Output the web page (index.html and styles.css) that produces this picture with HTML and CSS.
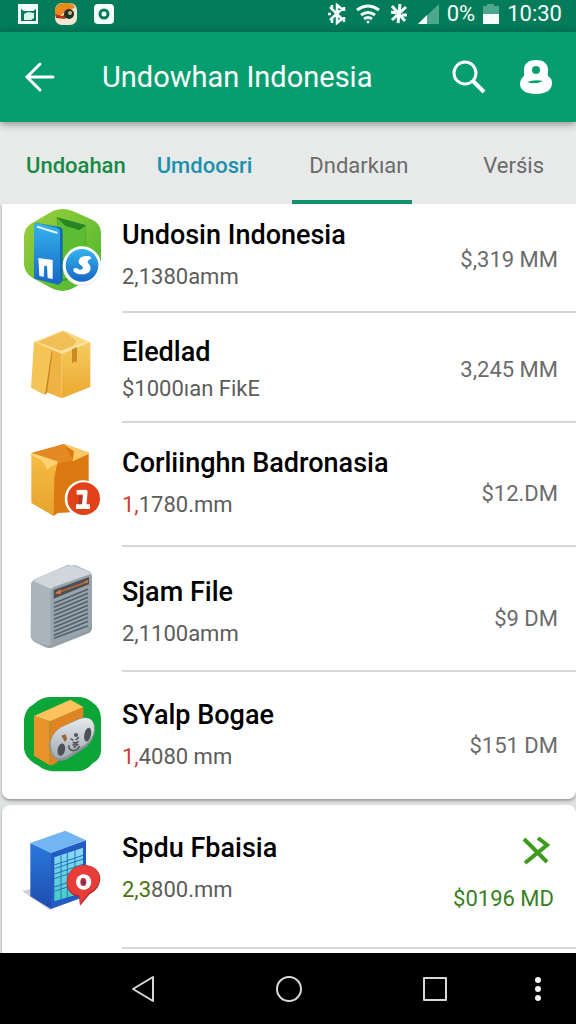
FILE: index.html
```html
<!DOCTYPE html>
<html lang="id">
<head>
  <meta charset="UTF-8">
  <meta name="viewport" content="width=device-width, initial-scale=1.0">
  <title>Undowhan Indonesia</title>
  <link rel="stylesheet" href="styles.css">
</head>
<body>
  <div class="status-bar">
    <div class="status-group">
      <svg class="status-app" viewBox="0 0 22 22">
        <path fill="#f4fffb" d="M1 1h20v20H1z"/>
        <path fill="#08785a" d="M4 6l3 2h9l3-2v12H4z"/>
        <path fill="#d8f5ea" d="M7 11l4-2 6 1v5l-3 2H7z"/>
      </svg>
      <svg class="status-app" viewBox="0 0 22 22">
        <rect width="22" height="22" rx="7" fill="#f0e6d2"/>
        <path fill="#e88a1c" d="M0 12V6q2-6 9-6h6q4 1 5 5l-7 2-8 6z"/>
        <path fill="#b5331c" d="M0 11l7 2 6-3-3 6-9-1z"/>
        <circle cx="14" cy="11" r="5" fill="#20302a"/>
        <circle cx="15" cy="10" r="2" fill="#d8b56b"/>
      </svg>
      <svg class="status-app" viewBox="0 0 22 22">
        <rect x="1" y="1" width="20" height="20" rx="4" fill="#f4fffb"/>
        <circle cx="11" cy="11" r="4" fill="none" stroke="#08785a" stroke-width="3"/>
      </svg>
    </div>
    <div class="status-group status-right">
      <svg width="20" height="22" viewBox="0 0 20 22" fill="none" stroke="#f4fffb" stroke-width="2.5">
        <path d="M3 4l12 12-5 4V2l5 4L3 17M5 2v5M5 14v6M1 11h3M17 4v4M17 14v5"/>
      </svg>
      <svg width="26" height="22" viewBox="0 0 26 22" fill="none" stroke="#f4fffb" stroke-width="3">
        <path d="M2 7q11-8 22 0M6 12q7-5 14 0M9 16q4-3 8 0"/>
        <circle cx="13" cy="19" r="1" fill="#f4fffb" stroke-width="1"/>
      </svg>
      <svg width="20" height="22" viewBox="0 0 20 22" fill="none" stroke="#f4fffb" stroke-width="3">
        <path d="M11 1L9 20M3 3l13 15M17 4L3 17M2 9l5 1M13 12h5"/>
      </svg>
      <svg width="22" height="22" viewBox="0 0 22 22">
        <path fill="#4da78c" d="M22 1v20H1z"/>
        <path fill="#f4fffb" d="M10 12v9H1z"/>
      </svg>
      <span>0%</span>
      <svg width="16" height="22" viewBox="0 0 16 22">
        <path fill="#4da78c" d="M4 1h7v2h5v8H0V3h4z"/>
        <path fill="#f4fffb" d="M0 11h16v10H0z"/>
      </svg>
      <time>10:30</time>
    </div>
  </div>

  <header class="app-bar">
    <button class="icon-button" aria-label="Back">
      <svg width="32" height="32" viewBox="0 0 32 32" fill="none" stroke="#fff" stroke-width="3" stroke-linecap="round">
        <path d="M29 16H4M16 3L3 16l13 13"/>
      </svg>
    </button>
    <h1>Undowhan Indonesia</h1>
    <button class="icon-button" aria-label="Search">
      <svg width="36" height="36" viewBox="0 0 36 36" fill="none" stroke="#fff">
        <circle cx="15" cy="14" r="11" stroke-width="3"/>
        <path stroke-width="4" d="M22 21l12 12"/>
      </svg>
    </button>
    <button class="icon-button" aria-label="Account">
      <svg width="32" height="36" viewBox="0 0 32 36">
        <path fill="#fff" d="M16 1c7 0 12 3 12 10 0 4-1 5 1 7 2 1 3 3 3 6 0 7-6 11-16 11S0 31 0 25c0-3 1-5 3-7 2-2 1-3 1-7C4 4 9 1 16 1z"/>
        <circle cx="16" cy="11" r="4" fill="#08a06f"/>
        <path fill="#08a06f" d="M7 23q8-3 16-1-7 4-16 1z"/>
      </svg>
    </button>
  </header>

  <nav class="tabs">
    <a class="tab green" href="#">Undoahan</a>
    <a class="tab blue" href="#">Umdoosri</a>
    <a class="tab active" href="#">Dndarkıan</a>
    <a class="tab last" href="#">Verśis</a>
  </nav>

  <main>
    <ul class="card">
      <li class="row row-first">
        <svg class="thumb" viewBox="66 24 246 288">
          <defs>
            <linearGradient id="blue" x1="0" y1="0" x2="0" y2="1">
              <stop offset="0" stop-color="#35b4ec"/><stop offset="1" stop-color="#1767c8"/>
            </linearGradient>
            <linearGradient id="green" x1="0" y1="0" x2="1" y2="1">
              <stop offset="0" stop-color="#a0cf3e"/><stop offset="1" stop-color="#45b52d"/>
            </linearGradient>
          </defs>
          <path fill="url(#green)" d="M160 32q30-10 58 1l62 28q22 11 23 38v94q-1 24-22 36l-62 36q-32 16-64 0l-58-32q-24-14-25-40v-84q1-28 24-40z"/>
          <path fill="#329a24" d="M170 52l88 24v150l-68 18z"/>
          <path fill="#5dbd32" d="M172 52l65 38 20-13v66l-26 90-45 4z"/>
          <path fill="#278525" d="M170 52l88 24-20 14-42-12z"/>
          <path fill="#126aae" d="M106 68l72 13q10 2 10 13v148l-12 12-73-18z"/>
          <path fill="url(#blue)" d="M108 68l63 15q9 3 9 12v148q-1 12-12 9l-58-17q-8-3-8-11V76q0-8 6-8z"/>
          <path stroke="#e4f7ff" stroke-width="6" d="M111 80l61 19"/>
          <path fill="#fff" d="M115 174l43 6v57l-15-3-2-36-8-1-2 34-13-4z"/>
          <circle cx="246" cy="199" r="58" fill="#e9eef2"/>
          <circle cx="246" cy="196" r="57" fill="#fff"/>
          <circle cx="246" cy="196" r="49" fill="url(#blue)"/>
          <path fill="#fff" d="M262 168c-14-2-28 7-26 19 2 9 12 10 13 16-2 7-12 8-18 2-8-4-14 3-9 10 9 10 39 12 48-3 6-12-4-19-7-26 0-7 11-8 11-12-2-4-7-6-12-6z"/>
        </svg>
        <div class="info">
          <h2>Undosin Indonesia</h2>
          <p>2,1380amm</p>
        </div>
        <div class="price">$,319 MM</div>
      </li>
      <li class="row row-second">
        <svg class="thumb" viewBox="66 21 246 288">
          <defs>
            <linearGradient id="box" x1="0" y1="0" x2="0" y2="1">
              <stop offset="0" stop-color="#f6cb5e"/><stop offset="1" stop-color="#eba92f"/>
            </linearGradient>
          </defs>
          <path fill="#ffe19a" d="M102 80l88-34 81 35-86 35z"/>
          <path fill="#f0bf55" d="M112 81l77-32 65 30-71 28z"/>
          <path fill="#f8d77f" d="M190 48l64 31-35 14 10-15z"/>
          <path fill="#efb344" d="M102 80l83 36v134l-48-20-35-18z"/>
          <path fill="url(#box)" d="M185 116l86-35v135l-86 34z"/>
          <path fill="#cc8a25" d="M216 103l15-7v46l-5-3-10 6z"/>
          <path fill="#c98622" d="M153 109l4 4-16 122-7 4z"/>
          <path fill="#f4c456" d="M102 80l53 24-20 136-42-22z"/>
        </svg>
        <div class="info">
          <h2>Eledlad</h2>
          <p>$1000ıan FikE</p>
        </div>
        <div class="price">3,245 MM</div>
      </li>
      <li class="row row-third">
        <svg class="thumb" viewBox="66 18 246 288">
          <defs>
            <linearGradient id="carton" x1="0" y1="0" x2="0" y2="1">
              <stop offset="0" stop-color="#f5bd45"/><stop offset="1" stop-color="#e7a32c"/>
            </linearGradient>
          </defs>
          <path fill="#dc7911" d="M94 69l98-27 74 26v176l-92 5-13 9z"/>
          <path fill="#e58a22" d="M96 69l96-26 20 9 3 40-45 8z"/>
          <path fill="#f9c964" d="M192 42l74 25-1 6-47 21z"/>
          <path fill="#dc7911" d="M192 44l30 20-4 28z"/>
          <path fill="url(#carton)" d="M94 69l79 25-10 48-2 116-67-39z"/>
          <path fill="#ffd170" d="M94 68l79 27-2 8q-12 2-30 16-5-16-17-28L94 76z"/>
          <circle cx="249" cy="206" r="55" fill="#fff"/>
          <circle cx="251" cy="206" r="49" fill="#e34118"/>
          <path fill="none" stroke="#fff" stroke-width="14" stroke-linejoin="round" d="M230 187l26-1-4 43M228 230h42"/>
          <path fill="#a93a2c" d="M235 200l13-4-2 26-9 1z"/>
        </svg>
        <div class="info">
          <h2>Corliinghn Badronasia</h2>
          <p><span class="red">1,</span>1780.mm</p>
        </div>
        <div class="price">$12.DM</div>
      </li>
      <li class="row row-fourth">
        <svg class="thumb" viewBox="66 45 246 288">
          <defs>
            <linearGradient id="metal" x1="0" y1="0" x2="1" y2="1">
              <stop offset="0" stop-color="#b8c1c8"/><stop offset="1" stop-color="#85919a"/>
            </linearGradient>
          </defs>
          <path fill="url(#metal)" transform="translate(0 6)" d="M93 98q0-12 14-18l91-39q14-7 27-2l40 18q11 5 11 18v151q0 14-11 18l-105 42q-12 5-24 0l-32-16q-12-7-12-20z"/>
          <path fill="#d0d6da" d="M102 87l103-40q10-5 22 2l39 16q6 3 7 9l-106 41q-10 4-16 1l-45-21z"/>
          <path fill="#a9b4bc" d="M96 95l49 20q7 3 7 12v160l-24-4-25-13q-10-6-10-20V103z"/>
          <path fill="#98a4ac" d="M152 123q0-7 9-12l109-38q5 1 5 8v145l-10 18-113 44z"/>
          <path fill="#4d5055" d="M161 120l106-39v22l-106 43z"/>
          <path stroke="#b96a3c" stroke-width="5" d="M168 130l94-35"/>
          <path fill="#e77a2d" d="M166 129l16-11v15zM252 96l12-7-2 11z"/>
          <path stroke="#53616d" stroke-width="5" d="M162 160l102-42M162 172l102-42M162 184l102-42M162 196l102-42M162 208l102-42M162 220l102-42M162 232l102-42M162 244l102-42M162 256l102-42M162 265l102-38"/>
        </svg>
        <div class="info">
          <h2>Sjam File</h2>
          <p>2,1100amm</p>
        </div>
        <div class="price">$9 DM</div>
      </li>
      <li class="row row-fifth">
        <svg class="thumb" viewBox="66 12 246 288">
          <defs>
            <linearGradient id="reel" x1="0" y1="0" x2="0" y2="1">
              <stop offset="0" stop-color="#e5e9eb"/><stop offset="1" stop-color="#a2aab0"/>
            </linearGradient>
          </defs>
          <path fill="#0ba538" d="M150 39h84q22 0 38 12 31 20 31 52v100q-2 22-24 34-20 24-48 25h-74q-24-2-44-18-38-20-41-50v-88q3-32 30-46 20-20 48-21z"/>
          <path fill="#e9942b" d="M102 96l47 16v132l-47-29z"/>
          <path fill="#df8422" d="M149 112l101-43v104l-90 70-11 1z"/>
          <path fill="#ffc25c" d="M102 96l109-49 39 22-100 43z"/>
          <path fill="#88939a" d="M148 184q4-36 36-55l52-25q40-12 48 22 5 34-25 63l-60 38q-44 16-51-43z"/>
          <path fill="url(#reel)" d="M152 178q3-30 32-48l55-25q36-12 43 19 5 32-24 56l-60 38q-42 20-46-40z"/>
          <ellipse cx="184" cy="197" rx="11" ry="19" fill="#4b5257" transform="rotate(12 184 197)"/>
          <ellipse cx="263" cy="152" rx="10" ry="21" fill="#4b5257" transform="rotate(12 263 152)"/>
          <path fill="#9a6338" d="M184 155l13-4 4 14-6 9z"/>
          <g fill="none" stroke="#50575d" stroke-width="5">
            <path d="M212 164l8 5M236 159l-8 9M218 175q10 4 18-3M207 184q-2 14 12 16 14-2 20-14M218 185q7-8 15-3l-12 9"/>
          </g>
          <circle cx="228" cy="153" r="6" fill="#50575d"/>
        </svg>
        <div class="info">
          <h2>SYalp Bogae</h2>
          <p><span class="red">1,</span>4080 mm</p>
        </div>
        <div class="price">$151 DM</div>
      </li>
    </ul>

    <ul class="card card-next">
      <li class="row row-sixth">
        <svg class="thumb" viewBox="66 15 246 288">
          <defs>
            <linearGradient id="tower" x1="0" y1="0" x2="0" y2="1">
              <stop offset="0" stop-color="#2b78de"/><stop offset="1" stop-color="#1d4dad"/>
            </linearGradient>
            <linearGradient id="screen" x1="0" y1="0" x2="0" y2="1">
              <stop offset="0" stop-color="#8cd8fb"/><stop offset="1" stop-color="#43cdc0"/>
            </linearGradient>
          </defs>
          <path fill="#ccd2dc" d="M66 225l31-7 62 60-12 3z"/>
          <path fill="url(#tower)" d="M91 81l62 29v169l-62-38z"/>
          <path fill="#245ac4" d="M153 110l105-37v168l-105 38z"/>
          <path fill="#72b5f3" d="M91 81l105-37 62 29-105 38z"/>
          <path fill="url(#screen)" d="M163 124l86-29v135l-86 26z"/>
          <path fill="none" stroke="#2471bf" stroke-width="3" d="M163 147l86-29M163 158l86-29M163 174l86-29M163 188l86-29M163 213l86-29M163 226l86-29M183 118v132M202 110v134M225 102v134"/>
          <path fill="#ba2627" d="M240 269l-3-27q-36-6-37-42 2-48 50-53 48 2 51 41-2 31-32 47z"/>
          <path fill="#e83c38" d="M240 264l-2-26q-35-6-36-39 2-46 47-51 47 2 50 39-3 29-33 45z"/>
          <circle cx="251" cy="198" r="23" fill="#fff"/>
          <ellipse cx="250" cy="198" rx="9" ry="12" fill="#b52b36"/>
          <circle cx="251" cy="199" r="4" fill="#31447c"/>
        </svg>
        <div class="info">
          <h2>Spdu Fbaisia</h2>
          <p><span class="olive">2,3</span>800.mm</p>
        </div>
        <div class="price price-action">
          <button class="icon-button" aria-label="Dismiss">
            <svg width="28" height="32" viewBox="0 0 28 32" fill="none" stroke="#3f9b20" stroke-width="4">
              <path d="M2 4l23 23M3 28L25 10l-9-7"/>
            </svg>
          </button>
          <span>$0196 MD</span>
        </div>
      </li>
    </ul>
  </main>

  <footer class="nav-bar">
    <button class="icon-button" aria-label="Back">
      <svg width="28" height="28" viewBox="0 0 28 28" fill="none" stroke="#d8d8d8" stroke-width="2" stroke-linejoin="round">
        <path d="M24 2v24L4 14z"/>
      </svg>
    </button>
    <button class="icon-button" aria-label="Home">
      <svg width="28" height="28" viewBox="0 0 28 28" fill="none" stroke="#d8d8d8" stroke-width="2">
        <circle cx="14" cy="14" r="12"/>
      </svg>
    </button>
    <button class="icon-button" aria-label="Recent apps">
      <svg width="28" height="28" viewBox="0 0 28 28" fill="none" stroke="#d8d8d8" stroke-width="2" stroke-linejoin="round">
        <path d="M3 3h22v22H3z"/>
      </svg>
    </button>
    <button class="icon-button more" aria-label="More options">
      <svg width="8" height="28" viewBox="0 0 8 28" fill="#f2f2f2">
        <circle cx="4" cy="5" r="3"/><circle cx="4" cy="14" r="3"/><circle cx="4" cy="23" r="3"/>
      </svg>
    </button>
  </footer>
</body>
</html>
```

FILE: styles.css
```css
* {
  box-sizing: border-box;
}

body {
  display: flex;
  flex-direction: column;
  min-height: 100vh;
  margin: 0;
  background: #e0e1e1;
  color: #000;
  font-family: Roboto, "Liberation Sans", sans-serif;
  font-size: 22px;
}

h1, h2, p, ul {
  margin: 0;
  padding: 0;
  font-weight: 400;
}

svg {
  display: block;
  flex: none;
}

.icon-button {
  padding: 0;
  border: 0;
  background: none;
  cursor: pointer;
}

/* status bar */
.status-bar {
  display: flex;
  justify-content: space-between;
  height: 32px;
  padding: 0 14px 4px 17px;
  background: #047b59;
  color: #f4fffb;
  line-height: 28px;
}

.status-group {
  display: flex;
  align-items: center;
  gap: 16px;
}

.status-right {
  gap: 8px;
}

.status-app {
  width: 22px;
  height: 22px;
}

/* app bar */
.app-bar {
  display: flex;
  align-items: center;
  height: 90px;
  padding: 0 24px;
  background: #069e6e;
  color: #fff;
  box-shadow: 0 2px 8px rgba(0, 0, 0, 0.4);
  z-index: 1;
}

.app-bar h1 {
  flex: 1;
  padding-left: 46px;
  font-size: 29px;
}

.app-bar .icon-button + .icon-button {
  margin-left: 34px;
}

/* tabs */
.tabs {
  display: flex;
  height: 82px;
  padding: 0 32px 0 26px;
  background: #e8e9e9;
}

.tab {
  padding-top: 8px;
  border-bottom: 4px solid transparent;
  color: #6b6b6b;
  line-height: 72px;
  text-decoration: none;
}

.tab.green {
  color: #168a43;
  font-weight: 500;
}

.tab.blue {
  margin-left: 31px;
  color: #1b91ab;
  font-weight: 500;
}

.tab.active {
  margin-left: 40px;
  padding-left: 17px;
  padding-right: 3px;
  border-color: #129070;
}

.tab.last {
  margin-left: auto;
}

/* list */
main {
  flex: 1;
}

.card {
  margin-left: 2px;
  background: #fff;
  border-radius: 0 0 8px 8px;
  box-shadow: 0 2px 3px rgba(0, 0, 0, 0.3);
  list-style: none;
}

.card-next {
  margin-top: 6px;
  padding-bottom: 4px;
  border-radius: 8px 8px 0 0;
}

.row {
  display: grid;
  grid-template-columns: 82px 1fr auto;
  column-gap: 18px;
  align-items: center;
  padding: 16px 18px 0 20px;
}

.row::after {
  content: "";
  grid-column: 2 / 4;
  height: 2px;
  margin: 12px -18px 0 0;
  background: #d6d7d7;
}

.row-first {
  padding-top: 4px;
}

.row-first::after {
  margin-top: 7px;
}

.row-second {
  padding-top: 9px;
}

.row-second::after {
  margin-top: 3px;
}

.row-third {
  padding-top: 13px;
}

.row-third::after {
  margin-top: 13px;
}

.row-fourth {
  padding-top: 18px;
}

.row-fourth::after {
  margin-top: 9px;
}

.row-fifth::after {
  margin-top: 13px;
  background: none;
}

.row-sixth::after {
  margin-top: 30px;
}

.thumb {
  width: 82px;
  height: 96px;
}

.info h2 {
  margin-bottom: 10px;
  font-size: 27px;
  font-weight: 500;
  line-height: 32px;
}

.row-second h2 {
  margin-bottom: 5px;
}

.info p {
  color: #5c5c5c;
  line-height: 32px;
}

.info .red {
  color: #d23a36;
}

.info .olive {
  color: #4a7211;
}

.price {
  padding-top: 20px;
  color: #6b6b6b;
  line-height: 32px;
}

.row-first .price {
  padding-top: 8px;
}

.row-second .price {
  padding-top: 0;
}

.row-fourth .price {
  padding-top: 12px;
}

.price-action {
  display: flex;
  flex-direction: column;
  align-items: flex-end;
  gap: 16px;
  padding: 12px 4px 0 0;
  color: #37811f;
}

.price-action .icon-button {
  margin-right: 4px;
}

/* navigation bar */
.nav-bar {
  display: grid;
  grid-template-columns: repeat(3, 1fr) 34px;
  align-items: center;
  justify-items: center;
  height: 71px;
  padding: 0 34px 0 70px;
  background: #000;
}

.nav-bar .more {
  justify-self: end;
}
```
